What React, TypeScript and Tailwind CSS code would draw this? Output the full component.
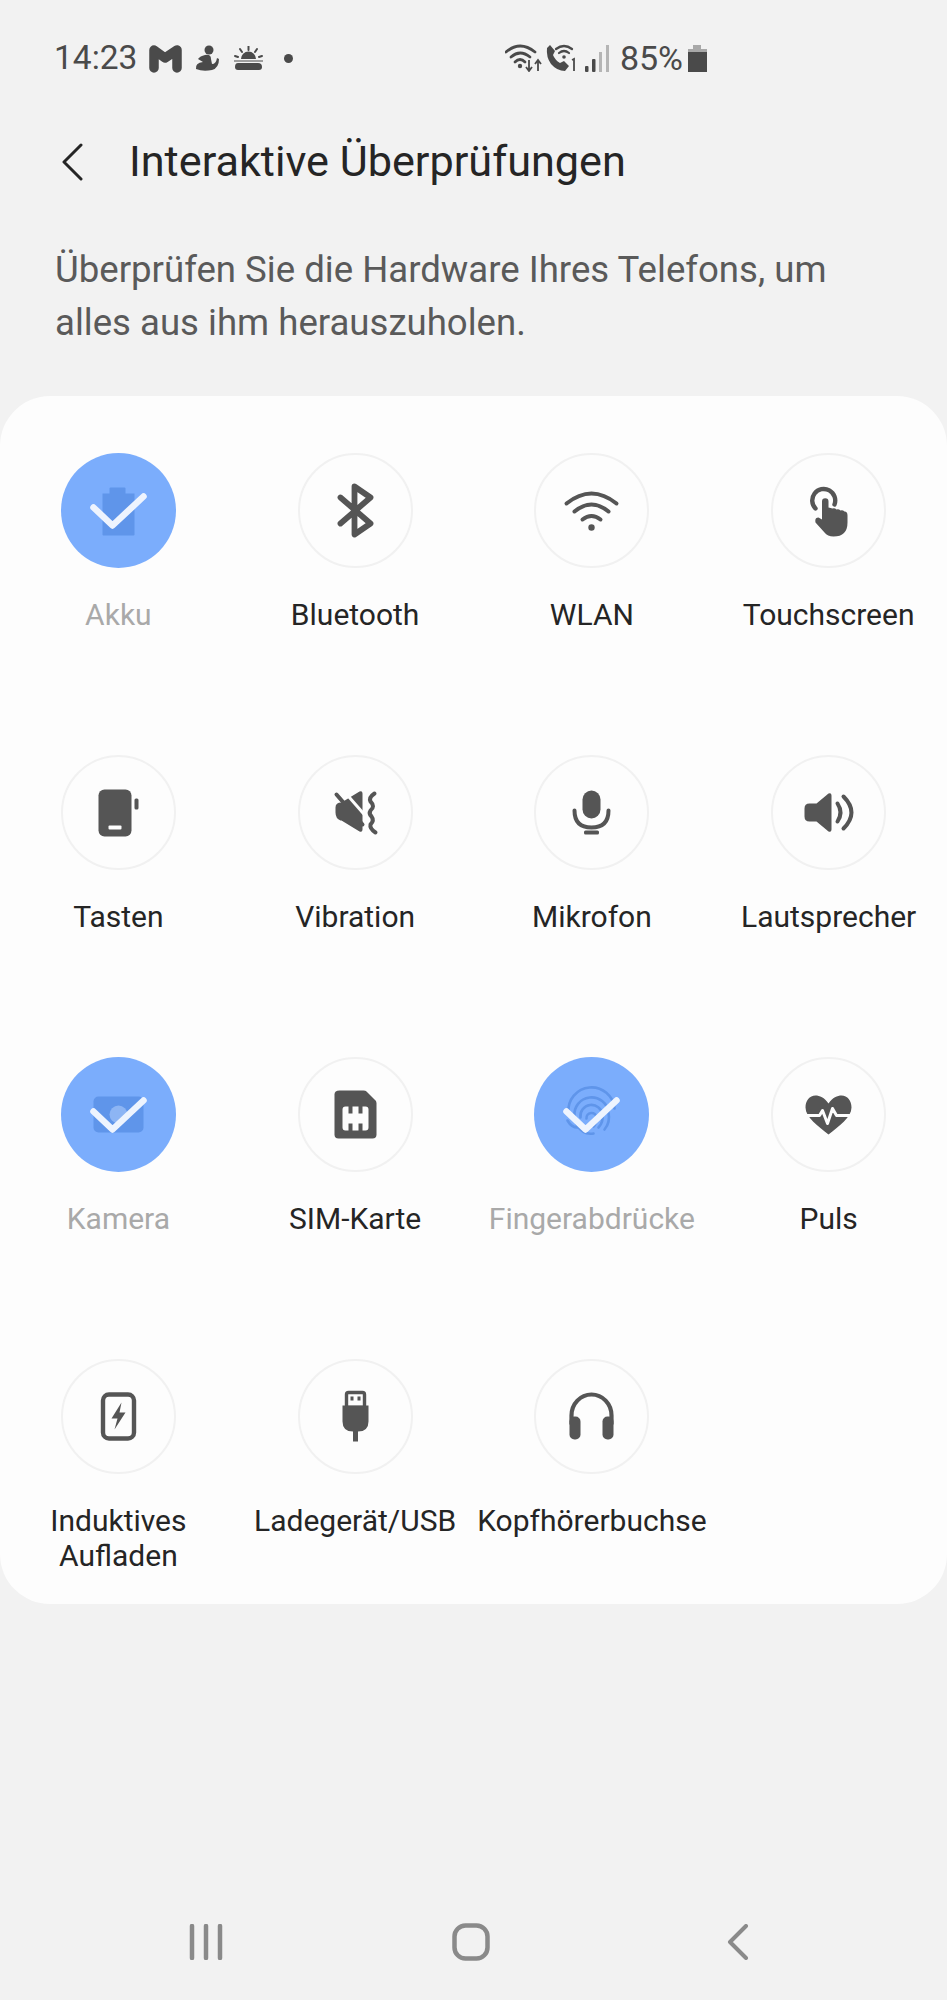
import React from "react";

const D = "#555555";
const B = "#5f95ea";

const Check = () => (
  <path d="M-25,-3 L-6,15 L25,-14" fill="none" stroke="#eef4fe" strokeWidth="6.5" strokeLinecap="round" strokeLinejoin="round" />
);

const icons: Record<string, React.ReactNode> = {
  battery: (
    <>
      <path d="M-16,-17 H-9 V-22 Q-9,-23 -8,-23 H6 Q7,-23 7,-22 V-17 H16 V24 Q16,25 15,25 H-15 Q-16,25 -16,24 Z" fill={B} />
      <Check />
    </>
  ),
  bluetooth: (
    <path d="M-15,-13 L15,13 L-1,24 V-24 L15,-13 L-15,13" fill="none" stroke={D} strokeWidth="5.8" strokeLinecap="round" strokeLinejoin="round" />
  ),
  wifi: (
    <g fill="none" stroke={D} strokeWidth="4" strokeLinecap="round">
      <path d="M-25,-7 Q0,-27 25,-7" />
      <path d="M-17,1 Q0,-13 17,1" />
      <path d="M-9,9 Q0,2 9,9" />
      <circle cx="0" cy="17" r="3.2" fill={D} stroke="none" />
    </g>
  ),
  touch: (
    <>
      <path d="M-13,-2 A11.5,11.5 0 1 1 6,-6" fill="none" stroke={D} strokeWidth="4.4" strokeLinecap="round" />
      <path d="M-6.5,-9 A3.2,3.2 0 0 1 0,-9 V-3 L4,-2 Q6,-3 8,-1 Q10,-2 12,0 Q14,-1 16,1 Q19,1 19,5 V12 Q19,26 5,26 Q-1,26 -4,22 L-13,12 Q-14,7 -10,7 L-6.5,9 Z" fill={D} />
    </>
  ),
  keys: (
    <>
      <rect x="-20" y="-23" width="33" height="47" rx="6" fill={D} />
      <rect x="16" y="-14" width="4" height="11" rx="1.5" fill={D} />
      <rect x="-10" y="13" width="13" height="4" rx="1" fill="#fdfdfd" />
    </>
  ),
  vibration: (
    <>
      <path d="M-14,-10 L4,-21 Q7,-22 7,-19 V17 Q7,20 4,19 L-14,8 H-15 Q-20,6 -20,0 V-5 Q-20,-10 -14,-10 Z" fill={D} />
      <path d="M-13,-23 L14,8" stroke="#fdfdfd" strokeWidth="3" />
      <path d="M-19,-18 L7,12" stroke={D} strokeWidth="4" strokeLinecap="round" />
      <path d="M19,-19 Q13,-15 15,-11 Q20,-6 15,-2 Q13,1 16,4 Q19,8 15,12 Q14,16 20,20" fill="none" stroke={D} strokeWidth="4" strokeLinecap="round" />
    </>
  ),
  mic: (
    <>
      <rect x="-9" y="-22" width="18" height="28" rx="9" fill={D} />
      <path d="M-17,-2 Q-17,15 0,15 Q17,15 17,-2" fill="none" stroke={D} strokeWidth="4" strokeLinecap="round" />
      <rect x="-7.5" y="18" width="15" height="4" rx="1.5" fill={D} />
    </>
  ),
  speaker: (
    <>
      <path d="M-19,-9 H-12 L0,-19 Q3,-20 3,-17 V17 Q3,20 0,19 L-12,9 H-19 Q-24,9 -24,4 V-4 Q-24,-9 -19,-9 Z" fill={D} />
      <path d="M9,-9 Q15,0 9,9" fill="none" stroke={D} strokeWidth="4" strokeLinecap="round" />
      <path d="M15,-16 Q31,0 15,16" fill="none" stroke={D} strokeWidth="4" strokeLinecap="round" />
    </>
  ),
  camera: (
    <>
      <rect x="-25" y="-18" width="50" height="36" rx="5" fill={B} />
      <circle cx="0" cy="0" r="9" fill="#8db5f4" />
      <Check />
    </>
  ),
  sim: (
    <>
      <path d="M-16,-24 H8 Q10,-24 11,-23 L20,-14 Q21,-13 21,-11 V20 Q21,24 17,24 H-17 Q-21,24 -21,20 V-20 Q-21,-24 -16,-24 Z" fill={D} />
      <path d="M-10,-8 H-7 V-1 H-3 V-8 H3 V-1 H7 V-8 H10 Q13,-8 13,-5 V13 Q13,16 10,16 H7 V9 H3 V16 H-3 V9 H-7 V16 H-10 Q-13,16 -13,13 V-5 Q-13,-8 -10,-8 Z" fill="#fdfdfd" />
    </>
  ),
  fingerprint: (
    <>
      <g fill="none" stroke={B} strokeWidth="2.6" strokeLinecap="round">
        <path d="M-23,-2 A23,23 0 0 1 23,-6" />
        <path d="M-17,2 A17,17 0 0 1 17,-2 Q19,8 13,15" />
        <path d="M-11,3 A11,11 0 0 1 11,0 Q12,8 7,13" />
        <path d="M-5,4 A5,5 0 0 1 5,3 Q5,9 2,12" />
        <path d="M-24,6 Q-20,13 -14,13" />
        <path d="M-15,10 Q-8,21 2,19" />
      </g>
      <Check />
    </>
  ),
  pulse: (
    <>
      <path d="M0,-11 C-4,-17 -9,-19 -13,-19 C-19,-19 -23,-14 -23,-7 C-23,3 -10,12 0,20 C10,12 23,3 23,-7 C23,-14 19,-19 13,-19 C9,-19 4,-17 0,-11 Z" fill={D} />
      <path d="M-24,1 H-9 L-6,-4 L-1,9 L4,-6 L8,1 H24" fill="none" stroke="#fdfdfd" strokeWidth="3" strokeLinejoin="round" />
    </>
  ),
  wireless: (
    <>
      <rect x="-15.5" y="-22" width="31" height="44" rx="6" fill="none" stroke={D} strokeWidth="4.4" />
      <path d="M3,-14 L-7,2 H-1 L-4,13 L7,-4 H1 Z" fill={D} />
    </>
  ),
  usb: (
    <>
      <rect x="-9" y="-24" width="18" height="15" rx="2" fill="none" stroke={D} strokeWidth="3.4" />
      <rect x="-5" y="-20" width="3" height="4" fill={D} />
      <rect x="2" y="-20" width="3" height="4" fill={D} />
      <path d="M-13,-11 H13 V5 Q13,15 2.5,15 V25 H-2.5 V15 Q-13,15 -13,5 Z" fill={D} />
    </>
  ),
  headphones: (
    <>
      <path d="M-20,8 V-1 A20,21 0 0 1 20,-1 V8" fill="none" stroke={D} strokeWidth="4.2" />
      <rect x="-22" y="0" width="11" height="23" rx="5" fill={D} />
      <rect x="11" y="0" width="11" height="23" rx="5" fill={D} />
    </>
  ),
};

type Item = { label: string[]; icon: string; done?: boolean };

const items: Item[] = [
  { label: ["Akku"], icon: "battery", done: true },
  { label: ["Bluetooth"], icon: "bluetooth" },
  { label: ["WLAN"], icon: "wifi" },
  { label: ["Touchscreen"], icon: "touch" },
  { label: ["Tasten"], icon: "keys" },
  { label: ["Vibration"], icon: "vibration" },
  { label: ["Mikrofon"], icon: "mic" },
  { label: ["Lautsprecher"], icon: "speaker" },
  { label: ["Kamera"], icon: "camera", done: true },
  { label: ["SIM-Karte"], icon: "sim" },
  { label: ["Fingerabdrücke"], icon: "fingerprint", done: true },
  { label: ["Puls"], icon: "pulse" },
  { label: ["Induktives", "Aufladen"], icon: "wireless" },
  { label: ["Ladegerät/USB"], icon: "usb" },
  { label: ["Kopfhörerbuchse"], icon: "headphones" },
];

function Tile({ item }: { item: Item }) {
  return (
    <div className="flex flex-col items-center">
      <div
        className={
          item.done
            ? "w-[115px] h-[115px] rounded-full bg-[#7badfc]"
            : "w-[115px] h-[115px] rounded-full border-2 border-[#f1f1f1]"
        }
      >
        <svg
          viewBox={item.done ? "-57.5 -57.5 115 115" : "-55.5 -55.5 111 111"}
          className="block w-full h-full"
        >
          {icons[item.icon]}
        </svg>
      </div>
      <div
        className={
          item.done
            ? "mt-[29px] text-[30px] leading-[35px] text-center whitespace-nowrap text-[#a9a9a9]"
            : "mt-[29px] text-[30px] leading-[35px] text-center whitespace-nowrap text-[#252525]"
        }
      >
        {item.label.map((l) => (
          <div key={l}>{l}</div>
        ))}
      </div>
    </div>
  );
}

function StatusBar() {
  return (
    <div className="h-[116px] pl-[54px] pr-[240px] flex items-center justify-between text-[#4a4a4a]">
      <div className="flex items-center">
        <span className="text-[33.5px] leading-none">14:23</span>
        <svg width="33" height="30" viewBox="0 0 33 30" className="ml-[12px]">
          <path d="M5,25 V7 L16,15 L28,7 V25" fill="none" stroke="#4a4a4a" strokeWidth="9.5" strokeLinecap="round" strokeLinejoin="round" />
        </svg>
        <svg width="25" height="27" viewBox="0 0 25 27" className="ml-[13px]">
          <circle cx="14" cy="5" r="4.5" fill="#4a4a4a" />
          <path d="M10,10 Q16,9 16,14 L17,19 Q21,19 22,13 L24,14 Q24,23 17,25 Q8,27 1,24 Q0,18 8,17 L3,14 Q5,11 10,10 Z" fill="#4a4a4a" />
        </svg>
        <svg width="29" height="25" viewBox="0 0 29 25" className="ml-[14px]">
          <path d="M14.5,0 V4 M6,3 L8,6 M23,3 L21,6 M1,10 L4,11 M28,10 L25,11" stroke="#4a4a4a" strokeWidth="2" strokeLinecap="round" />
          <path d="M7,13 A7.5,7.5 0 0 1 22,13 Z" fill="#4a4a4a" />
          <path d="M0,14.5 H29 V15.5 H0 Z" fill="#4a4a4a" />
          <path d="M4,17 H24 Q28,17 28,21 Q28,24 25,24 H4 Q1,24 1,21 Q1,17 4,17 Z" fill="#4a4a4a" />
        </svg>
        <span className="ml-[21px] w-[9px] h-[9px] rounded-full bg-[#4a4a4a]" />
      </div>
      <div className="flex items-center">
        <svg width="38" height="28" viewBox="0 0 38 28">
          <g fill="none" stroke="#4a4a4a" strokeWidth="2.8" strokeLinecap="round">
            <path d="M1,8 Q15,-4 30,8" />
            <path d="M6,13 Q15,5 25,13" />
            <path d="M10,18 Q15,13 20,18" />
          </g>
          <circle cx="15" cy="22" r="2.2" fill="#4a4a4a" />
          <path d="M24,16 V26 M21,23 L24,27 L27,23 M33,27 V17 M30,20 L33,16 L36,20" fill="none" stroke="#4a4a4a" strokeWidth="1.8" />
        </svg>
        <svg width="31" height="28" viewBox="0 0 31 28" className="ml-[3px]">
          <path d="M4,1 L9,7 L7,11 Q9,16 14,19 L18,17 L23,22 L19,27 Q11,27 5,20 Q0,13 1,4 Z" fill="#4a4a4a" />
          <g fill="none" stroke="#4a4a4a" strokeWidth="2.2" strokeLinecap="round">
            <path d="M10,5 Q18,-1 26,5" />
            <path d="M13,9 Q18,5 23,9" />
          </g>
          <circle cx="18" cy="13" r="1.8" fill="#4a4a4a" />
          <path d="M26,16 L28,15 V27" fill="none" stroke="#4a4a4a" strokeWidth="1.8" />
        </svg>
        <svg width="25" height="27" viewBox="0 0 25 27" className="ml-[8px]">
          <rect x="0" y="21" width="3.5" height="6" rx="1" fill="#4a4a4a" />
          <rect x="7" y="14" width="3.5" height="13" rx="1" fill="#4a4a4a" />
          <rect x="14" y="7" width="3" height="20" fill="#b5b5b5" />
          <rect x="21" y="0" width="3" height="27" fill="#b5b5b5" />
        </svg>
        <span className="ml-[10px] text-[34px] leading-none">85%</span>
        <svg width="19" height="27" viewBox="0 0 19 27" className="ml-[5px]">
          <path d="M5,0 H13 V4 H5 Z M0,4 H19 V7 H0 Z" fill="#a8a8a8" />
          <rect x="0" y="7" width="19" height="20" fill="#4a4a4a" />
        </svg>
      </div>
    </div>
  );
}

export default function App() {
  return (
    <div
      className="w-[947px] h-[2000px] bg-[#f2f2f2] flex flex-col overflow-hidden"
      style={{ fontFamily: "Roboto, 'Noto Sans', sans-serif" }}
    >
      <StatusBar />
      <div className="h-[92px] pl-[61px] flex items-center">
        <svg width="22" height="38" viewBox="0 0 22 38">
          <path d="M20,2 L3,19 L20,36" fill="none" stroke="#252525" strokeWidth="3" strokeLinecap="round" strokeLinejoin="round" />
        </svg>
        <h1 className="ml-[46px] text-[43.2px] leading-none font-normal text-[#252525] whitespace-nowrap">
          Interaktive Überprüfungen
        </h1>
      </div>
      <p className="mt-[35px] pl-[55px] text-[36.6px] leading-[53px] text-[#5a5a5a]">
        Überprüfen Sie die Hardware Ihres Telefons, um
        <br />
        alles aus ihm herauszuholen.
      </p>
      <div className="mt-[47px] rounded-[50px] bg-[#fdfdfd] pt-[57px] pb-[31px] grid grid-cols-4 auto-rows-min">
        {items.map((it, i) => (
          <div key={it.icon} className={i < 12 ? "h-[302px]" : ""}>
            <Tile item={it} />
          </div>
        ))}
      </div>
      <div className="mt-auto h-[116px] pl-[189px] flex items-center">
        <svg width="34" height="36" viewBox="0 0 34 36">
          <path d="M3,2 V34 M17,2 V34 M31,2 V34" stroke="#8a8a8a" strokeWidth="4.5" strokeLinecap="round" />
        </svg>
        <svg width="38" height="38" viewBox="0 0 38 38" className="ml-[229px]">
          <rect x="2.5" y="2.5" width="33" height="33" rx="11" fill="none" stroke="#8a8a8a" strokeWidth="4.5" />
        </svg>
        <svg width="22" height="36" viewBox="0 0 22 36" className="ml-[237px]">
          <path d="M19,2 L3,18 L19,34" fill="none" stroke="#8a8a8a" strokeWidth="4" strokeLinecap="round" strokeLinejoin="round" />
        </svg>
      </div>
    </div>
  );
}
